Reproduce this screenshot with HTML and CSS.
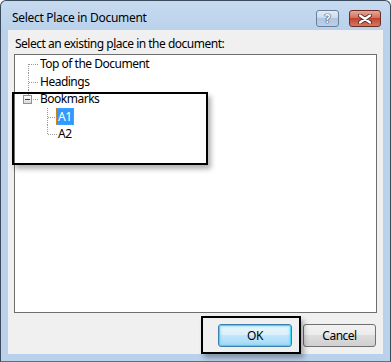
FILE: index.html
```html
<!DOCTYPE html>
<html>
<head>
<meta charset="utf-8">
<link rel="stylesheet" href="styles.css">
</head>
<body>
<div class="window">
  <div class="titlebar">
    <span class="title">Select Place in Document</span>
    <div class="caption-buttons">
      <div class="cap help">?</div>
      <div class="cap close">
        <svg width="14" height="10" viewBox="0 0 14 10">
          <path d="M2 1.5 L12 8.5 M12 1.5 L2 8.5" stroke="#5a2a22" stroke-width="4" stroke-linecap="round"/>
          <path d="M2 1.5 L12 8.5 M12 1.5 L2 8.5" stroke="#ffffff" stroke-width="2.2" stroke-linecap="round"/>
        </svg>
      </div>
    </div>
  </div>
  <div class="client">
    <div class="label">Select an existing p<u>l</u>ace in the document:</div>
    <div class="listbox">
      <ul class="tree">
        <li class="node root first tall">Top of the Document</li>
        <li class="node root short">Headings</li>
        <li class="node root last tall"><span class="expander"></span>Bookmarks</li>
        <li class="node child short"><span class="selected">A1</span></li>
        <li class="node child last tall">A2</li>
      </ul>
    </div>
    <div class="buttons">
      <div class="btn default">OK</div>
      <div class="btn">Cancel</div>
    </div>
  </div>
  <div class="callout callout-tree"></div>
  <div class="callout callout-ok"></div>
</div>
</body>
</html>
```
FILE: styles.css
```css
html, body {
  margin: 0;
  padding: 0;
  background: #ffffff;
}
body {
  width: 391px;
  height: 362px;
  overflow: hidden;
  font-family: "Noto Sans", "Open Sans", sans-serif;
  font-size: 12px;
  letter-spacing: -0.5px;
  color: #000;
}
.window {
  position: relative;
  box-sizing: border-box;
  width: 391px;
  height: 362px;
  border: 1px solid #3b4b5e;
  border-bottom-color: #1e8c9c;
  border-radius: 6px 6px 0 0;
  background: linear-gradient(to bottom, #c7dbf0 0, #b9d1ea 30px, #b9d1ea 100%);
  padding: 0 7px 7px 7px;
  display: flex;
  flex-direction: column;
}
.titlebar {
  height: 29px;
  display: flex;
  justify-content: space-between;
  align-items: flex-start;
}
.title {
  padding-top: 9px;
  padding-left: 4px;
  line-height: 16px;
  font-size: 12px;
  letter-spacing: -0.3px;
  color: #000;
}
.caption-buttons {
  display: flex;
  gap: 10px;
  margin-top: 9px;
  margin-right: 2px;
}
.cap {
  box-sizing: border-box;
  height: 17px;
  border-radius: 3px;
  display: flex;
  align-items: center;
  justify-content: center;
}
.help {
  width: 23px;
  border: 1px solid #6c7f99;
  background: linear-gradient(to bottom, #e3ecf7 0%, #cbdbee 45%, #afc5e1 50%, #bcd0ea 100%);
  color: #ffffff;
  font-weight: bold;
  font-size: 12px;
  letter-spacing: 0;
  line-height: 15px;
  text-shadow: 0 0 1px #2a3a50, 0 0 1px #2a3a50, 0 0 1px #2a3a50;
}
.close {
  width: 32px;
  border: 1px solid #6b2c25;
  background: linear-gradient(to bottom, #e6a796 0%, #d5705d 45%, #c2432f 50%, #d47a62 100%);
}
.client {
  flex: 1;
  background: #f0f0f0;
  padding: 6px 7px 0 6px;
  display: flex;
  flex-direction: column;
}
.label {
  margin-left: 1px;
  line-height: 16px;
  height: 16px;
}
.listbox {
  margin-top: 2px;
  box-sizing: border-box;
  width: 363px;
  height: 259px;
  border: 1px solid #6e6e6e;
  background: #ffffff;
}
.tree {
  list-style: none;
  margin: 0;
  padding: 0;
}
.node {
  position: relative;
  white-space: nowrap;
}
.tall { height: 18px; line-height: 18px; }
.short { height: 17px; line-height: 17px; }
.root { padding-left: 25px; }
.child { padding-left: 41px; }
.child.last { padding-left: 43px; }
.node::before {
  content: "";
  position: absolute;
  top: 0;
  bottom: 0;
  border-left: 1px dotted #9a9a9a;
}
.node::after {
  content: "";
  position: absolute;
  top: 50%;
  width: 10px;
  border-top: 1px dotted #9a9a9a;
}
.root::before { left: 13px; }
.root::after { left: 14px; width: 9px; }
.child::before { left: 32px; }
.child::after { left: 33px; width: 9px; }
.root.first::before { top: 50%; }
.root.last::before { bottom: 50%; }
.child.last::before { bottom: 50%; }
.expander {
  position: absolute;
  left: 8px;
  top: 5px;
  box-sizing: border-box;
  width: 9px;
  height: 9px;
  border: 1px solid #919191;
  background: linear-gradient(to bottom, #ffffff, #d8d8d8);
  z-index: 1;
  display: flex;
  align-items: center;
  justify-content: center;
}
.expander::after {
  content: "";
  width: 5px;
  height: 1px;
  background: #1c3d7a;
}
.selected {
  display: inline-block;
  box-sizing: border-box;
  height: 17px;
  line-height: 15px;
  padding: 0 1px;
  background: #3399ff;
  color: #ffffff;
  border: 1px dotted #d08a30;
  vertical-align: top;
}
.buttons {
  margin-top: 11px;
  margin-right: 0;
  display: flex;
  justify-content: flex-end;
  gap: 11px;
}
.btn {
  box-sizing: border-box;
  width: 73px;
  height: 23px;
  border: 1px solid #707070;
  border-radius: 3px;
  background: linear-gradient(to bottom, #f2f2f2 0%, #ebebeb 50%, #dddddd 50%, #cfcfcf 100%);
  display: flex;
  align-items: center;
  justify-content: center;
  line-height: 16px;
}
.btn.default {
  width: 74px;
  border-color: #3c7fb1;
  box-shadow: inset 0 0 0 1px #48d2f6, inset 0 0 2px 2px rgba(120, 215, 245, 0.5);
  background: linear-gradient(to bottom, #eaf6fd 0%, #d9f0fc 50%, #bee6fd 50%, #a7d9f5 100%);
}
.callout {
  position: absolute;
  box-sizing: border-box;
  border: 2px solid #000000;
  box-shadow: 3px 4px 5px rgba(0, 0, 0, 0.3);
}
.callout-tree {
  left: 11px;
  top: 91px;
  width: 196px;
  height: 73px;
}
.callout-ok {
  left: 200px;
  top: 315px;
  width: 100px;
  height: 38px;
}
```
